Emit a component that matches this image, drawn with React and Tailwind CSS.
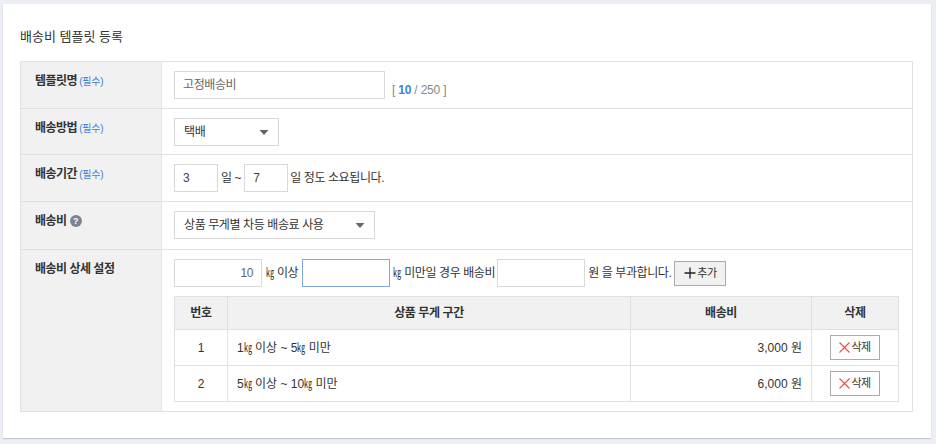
const F = "font-['Liberation_Sans','Noto_Sans_CJK_KR',sans-serif]";

function Req() {
  return <span className="ml-[2px] text-[10px] font-normal tracking-[-0.2px] text-[#3d7fd9]">(필수)</span>;
}

function Row({ label, h, children, last }) {
  return (
    <div className={`flex ${h} ${last ? "" : "border-b border-[#e0e0e0]"}`}>
      <div className="w-[141px] shrink-0 border-r border-[#e4e4e4] bg-[#f1f1f1] pl-[14px] pt-[11px] text-[12px] leading-[16px] font-bold tracking-[-0.5px] text-[#333]">
        {label}
      </div>
      <div className="min-w-0 flex-1 pl-[12px] pt-[9px] tracking-[-0.4px]">{children}</div>
    </div>
  );
}

function Box({ w, children, focus, right, color = "text-[#444]" }) {
  return (
    <div
      className={`flex h-[28px] ${w} shrink-0 items-center border bg-white px-[8px] text-[12px] ${color} ${right ? "justify-end" : ""} ${focus ? "border-[#7fa9dc]" : "border-[#d9d9d9]"}`}
    >
      {children}
    </div>
  );
}

function Select({ w, children }) {
  return (
    <div className={`flex h-[28px] ${w} items-center justify-between border border-[#d9d9d9] bg-white pl-[9px] pr-[9px] text-[12px] text-[#333]`}>
      <span>{children}</span>
      <svg width="10" height="5" viewBox="0 0 10 5"><path d="M0.5 0h9L5 5z" fill="#666" /></svg>
    </div>
  );
}

function DelBtn() {
  return (
    <div className="flex h-[25px] w-[50px] items-center justify-center gap-[1px] border border-[#aaa] bg-white text-[11px] tracking-[-0.5px] text-[#333]">
      <svg width="11" height="11" viewBox="0 0 11 11"><path d="M0.5 0.5l10 10M10.5 0.5l-10 10" stroke="#f04848" strokeWidth="1.1" fill="none" /></svg>
      <span>삭제</span>
    </div>
  );
}

function Tr({ n, range, fee, last }) {
  return (
    <div className={`flex items-center text-[12px] tracking-normal text-[#333] ${last ? "h-[35px]" : "h-[36px] border-b border-[#e0e0e0]"}`}>
      <div className="flex h-full w-[53px] items-center justify-center border-r border-[#e0e0e0]">{n}</div>
      <div className="flex h-full w-[403px] items-center border-r border-[#e0e0e0] pl-[9px]"><span>{range}</span></div>
      <div className="flex h-full w-[181px] items-center justify-end border-r border-[#e0e0e0] pr-[9px]">{fee}</div>
      <div className="flex h-full flex-1 items-center justify-center"><DelBtn /></div>
    </div>
  );
}

const Kg = () => (
  <span className="inline-block w-[8px] origin-left scale-x-[0.68] overflow-visible text-[12px] tracking-normal">㎏</span>
);

export default function App() {
  return (
    <div className={`h-[444px] w-[936px] overflow-hidden bg-[#ebeef5] pl-[3px] pt-[4px] ${F}`}>
      <div className="h-[434px] w-[928px] bg-white px-[17px] pt-[25px] shadow-[0_1px_1px_#c4c8d0]">
        <h1 className="h-[32px] text-[13px] leading-[16px] font-normal text-[#333]">배송비 템플릿 등록</h1>
        <div className="w-[893px] border border-[#e0e0e0]">
          <Row h="h-[47px]" label={<>템플릿명<Req /></>}>
            <div className="flex items-start">
              <Box w="w-[211px]" color="text-[#666]">고정배송비</Box>
              <div className="ml-[7px] mt-[11px] text-[12px] leading-[16px] tracking-[-0.2px] text-[#888]">
                [ <b className="text-[#3d7fd9]">10</b> / 250 ]
              </div>
            </div>
          </Row>
          <Row h="h-[46px]" label={<>배송방법<Req /></>}>
            <Select w="w-[105px]">택배</Select>
          </Row>
          <Row h="h-[47px]" label={<>배송기간<Req /></>}>
            <div className="flex items-center text-[12px] text-[#333]">
              <Box w="w-[44px]">3</Box>
              <span className="mx-[3px]">일 ~</span>
              <Box w="w-[44px]">7</Box>
              <span className="ml-[2px]">일 정도 소요됩니다.</span>
            </div>
          </Row>
          <Row
            h="h-[48px]"
            label={
              <span className="flex items-center">
                배송비
                <span className="ml-[3px] flex h-[12px] w-[12px] items-center justify-center rounded-full bg-[#7d8494] text-[9px] tracking-normal text-white">?</span>
              </span>
            }
          >
            <Select w="w-[201px]">상품 무게별 차등 배송료 사용</Select>
          </Row>
          <Row last h="h-[161px]" label="배송비 상세 설정">
            <div className="flex items-center text-[12px] text-[#333]">
              <Box w="w-[88px]" right color="text-[#666]">10</Box>
              <span className="ml-[4px] mr-[4px]"><Kg /> 이상</span>
              <Box w="w-[88px]" focus />
              <span className="ml-[3px] mr-[2px]"><Kg /> 미만일 경우 배송비</span>
              <Box w="w-[88px]" />
              <span className="ml-[3px]">원 을 부과합니다.</span>
              <div className="ml-[3px] flex h-[25px] w-[52px] items-center justify-center gap-[1px] border border-[#aaa] bg-[#f1f1f1] text-[11px]">
                <svg width="12" height="12" viewBox="0 0 12 12"><path d="M6 0.5v11M0.5 6h11" stroke="#222" strokeWidth="1.3" fill="none" /></svg>
                <span>추가</span>
              </div>
            </div>
            <div className="mt-[9px] w-[725px] border border-[#e0e0e0]">
              <div className="flex h-[33px] items-center border-b border-[#e0e0e0] bg-[#f1f1f1] text-[12px] font-bold text-[#333]">
                <div className="flex h-full w-[53px] items-center justify-center border-r border-[#e0e0e0]">번호</div>
                <div className="flex h-full w-[403px] items-center justify-center border-r border-[#e0e0e0]">상품 무게 구간</div>
                <div className="flex h-full w-[181px] items-center justify-center border-r border-[#e0e0e0]">배송비</div>
                <div className="flex h-full flex-1 items-center justify-center">삭제</div>
              </div>
              <Tr n="1" range={<>1<Kg /> 이상 ~ 5<Kg /> 미만</>} fee="3,000 원" />
              <Tr n="2" range={<>5<Kg /> 이상 ~ 10<Kg /> 미만</>} fee="6,000 원" last />
            </div>
          </Row>
        </div>
      </div>
    </div>
  );
}
